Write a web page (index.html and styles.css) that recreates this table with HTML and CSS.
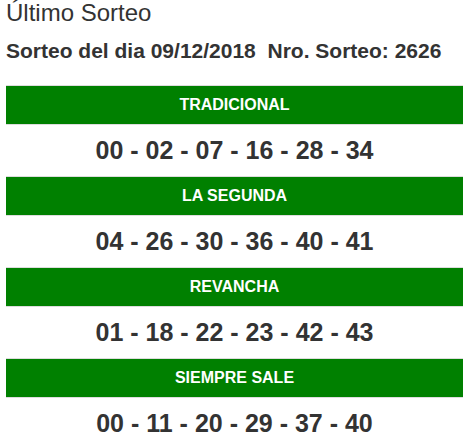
FILE: index.html
```html
<!DOCTYPE html>
<html lang="es">
<head>
<meta charset="utf-8">
<title>Último Sorteo</title>
<link rel="stylesheet" href="styles.css">
</head>
<body>
<div class="page">
  <h3 class="title">Último Sorteo</h3>
  <h4 class="subtitle">Sorteo del dia 09/12/2018&nbsp; Nro. Sorteo: 2626</h4>
  <div class="results">
    <div class="draw-name">TRADICIONAL</div>
    <div class="draw-numbers">00 - 02 - 07 - 16 - 28 - 34</div>
    <div class="draw-name">LA SEGUNDA</div>
    <div class="draw-numbers">04 - 26 - 30 - 36 - 40 - 41</div>
    <div class="draw-name">REVANCHA</div>
    <div class="draw-numbers">01 - 18 - 22 - 23 - 42 - 43</div>
    <div class="draw-name">SIEMPRE SALE</div>
    <div class="draw-numbers">00 - 11 - 20 - 29 - 37 - 40</div>
  </div>
</div>
</body>
</html>
```
FILE: styles.css
```css
html, body {
  margin: 0;
  padding: 0;
  background: #fff;
}
body {
  font-family: "Liberation Sans", Arial, sans-serif;
  color: #333;
}
.page {
  padding: 0 4px 0 6px;
  display: flex;
  flex-direction: column;
}
.title {
  margin: 0;
  font-size: 24px;
  font-weight: normal;
  line-height: 26px;
}
.subtitle {
  margin: 13px 0 0 0;
  font-size: 21px;
  font-weight: bold;
  line-height: 24px;
  white-space: nowrap;
}
.results {
  margin-top: 22px;
  display: flex;
  flex-direction: column;
}
.draw-name {
  border-top: 1px solid #ddd;
  background: #008000;
  color: #fff;
  font-weight: bold;
  font-size: 16px;
  height: 38px;
  display: flex;
  align-items: center;
  justify-content: center;
}
.draw-numbers {
  border-top: 1px solid #ddd;
  height: 51px;
  display: flex;
  align-items: center;
  justify-content: center;
  font-weight: bold;
  font-size: 25px;
}
```
